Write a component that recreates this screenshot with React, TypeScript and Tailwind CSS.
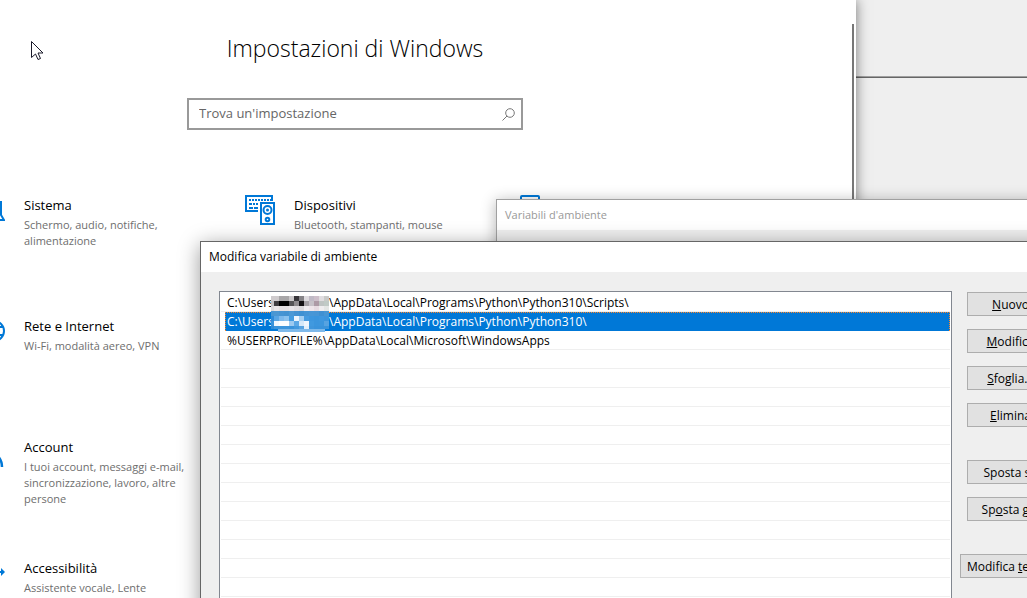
import type { ReactNode } from "react";

const ICON = "#0078d7";

function SystemIcon() {
  return (
    <svg width="30" height="30" viewBox="0 0 30 30" fill="none" stroke={ICON} strokeWidth="2">
      <path d="M4 20V7h22v13l3 5H1z" />
    </svg>
  );
}

function DevicesIcon() {
  return (
    <svg width="30" height="30" viewBox="0 0 30 30" fill="none" stroke={ICON} strokeWidth="2">
      <path d="M27 6V1H1v15h12" />
      <path d="M4 5h22" strokeDasharray="2 1" />
      <path d="M4 9h3m1 0h2m1 0h2M4 13h4m1 0h4" />
      <path d="M16 8h13v21H16z" />
      <circle cx="22.5" cy="15" r="4" />
      <circle cx="22.5" cy="15" r="1.500" fill={ICON} stroke="none" />
      <circle cx="22.5" cy="24.500" r="1.800" />
    </svg>
  );
}

function PhoneIcon() {
  return (
    <svg width="30" height="30" viewBox="0 0 30 30" fill="none" stroke={ICON} strokeWidth="2">
      <rect x="6" y="1" width="18" height="28" rx="1" />
    </svg>
  );
}

function NetworkIcon() {
  return (
    <svg width="30" height="30" viewBox="0 0 30 30" fill="none" stroke={ICON} strokeWidth="2">
      <circle cx="19" cy="15" r="10" />
      <ellipse cx="19" cy="15" rx="5" ry="10" />
      <path d="M10 11h18M10 19h18" />
    </svg>
  );
}

function AccountIcon() {
  return (
    <svg width="30" height="30" viewBox="0 0 30 30" fill="none" stroke={ICON} strokeWidth="2.500">
      <circle cx="14" cy="8" r="6" />
      <path d="M1 30a13 15 0 0 1 26 0" />
    </svg>
  );
}

function AccessIcon() {
  return (
    <svg width="30" height="30" viewBox="0 0 30 30" fill="none" stroke={ICON} strokeWidth="2">
      <circle cx="14" cy="14" r="9" strokeDasharray="4 2" />
      <path d="M14 14h14" />
      <path d="M26 10l4 4-4 4z" fill={ICON} stroke="none" />
    </svg>
  );
}

const categories = [
  { icon: SystemIcon, title: "Sistema", desc: "Schermo, audio, notifiche, alimentazione" },
  { icon: DevicesIcon, title: "Dispositivi", desc: "Bluetooth, stampanti, mouse" },
  { icon: PhoneIcon, title: "", desc: "" },
  { icon: NetworkIcon, title: "Rete e Internet", desc: "Wi-Fi, modalità aereo, VPN" },
  { icon: null, title: "", desc: "" },
  { icon: null, title: "", desc: "" },
  { icon: AccountIcon, title: "Account", desc: "I tuoi account, messaggi e-mail, sincronizzazione, lavoro, altre persone" },
  { icon: null, title: "", desc: "" },
  { icon: null, title: "", desc: "" },
  { icon: AccessIcon, title: "Accessibilità", desc: "Assistente vocale, Lente" },
];

// 5px blocks that hide the user name in the first two rows
const mosaic = [
  ["#cfcbcd", "#cfcbcd", "#a8a6a8", "#a8a6a8", "#cbc8ca", "#38363a", "#858387", "#dedbdf", "#c0bac6", "#cdbfca", "#e0dde0", "#c9cac8"],
  ["#c4c2c4", "#3f3d40", "#000000", "#000000", "#555355", "#8d898c", "#141215", "#a5a1a6", "#c6c1c8", "#ad9aa6", "#bfc4c3", "#c0cac6"],
  ["#dcdadc", "#e9e5e7", "#e3dfe1", "#e3dfe1", "#e8e4e7", "#e2dde0", "#dcd9dc", "#f1edf0", "#eee5ea", "#e7dbe2", "#efedef", "#e4e6e5"],
  ["#4796d4", "#4c97d2", "#4694d3", "#4492d1", "#4b98d5", "#4492d2", "#3e90d2", "#4494d5", "#4896d6", "#4895d5", "#3f90d2", "#4796d4"],
  ["#2f8bd8", "#58a5e4", "#7db9ec", "#8cc2ee", "#439be0", "#eef5fd", "#a5cff2", "#459be0", "#3d96de", "#3b95dd", "#3e97df", "#3c95dd"],
  ["#3a93db", "#f2f7fd", "#fbfdff", "#fbfdff", "#9dcaf0", "#5ca8e5", "#d5e8f9", "#eef5fd", "#4099df", "#3b95dd", "#3c96dd", "#57a3e1"],
  ["#2f8bd8", "#3b94dc", "#3c95dc", "#3d95dc", "#3a93db", "#4399de", "#57a3e1", "#e2effb", "#3f96dc", "#3a93db", "#3a93db", "#3b94db"],
];

const paths = [
  "C:\\Users\\*****\\AppData\\Local\\Programs\\Python\\Python310\\Scripts\\",
  "C:\\Users\\*****\\AppData\\Local\\Programs\\Python\\Python310\\",
  "%USERPROFILE%\\AppData\\Local\\Microsoft\\WindowsApps",
];

function PathText({ path }: { path: string }) {
  const [head, tail] = path.split("\\*****");
  if (tail === undefined) return <span>{path}</span>;
  return (
    <>
      <span className="w-[102px] shrink-0">{head}</span>
      <span>{tail}</span>
    </>
  );
}

function DialogButton({ children, className = "w-[87px]" }: { children: ReactNode; className?: string }) {
  return (
    <button
      type="button"
      className={`${className} h-6 shrink-0 whitespace-nowrap border border-[#adadad] bg-[#e1e1e1] pt-px`}
    >
      {children}
    </button>
  );
}

function SettingsWindow() {
  return (
    <section className="absolute -left-[146px] right-[171px] top-0 flex h-full bg-white shadow-[0_0_12px_rgba(0,0,0,0.5)]">
      <div className="flex-1">
        <h1 className="pt-8 text-center text-[23px] leading-8 font-light text-black">Impostazioni di Windows</h1>
        <div className="mx-auto mt-[34px] flex h-8 w-[336px] items-center border-2 border-[#999] px-[10px]">
          <input
            type="text"
            aria-label="Trova un'impostazione"
            placeholder="Trova un'impostazione"
            className="min-w-0 flex-1 pb-px text-[13px] outline-none placeholder:text-[#666]"
          />
          <svg className="-mr-1" width="13" height="13" viewBox="0 0 13 13" fill="none" stroke="#777">
            <circle cx="8" cy="5" r="4.300" />
            <path d="M5 8 .5 12.500" />
          </svg>
        </div>
        <div className="mx-auto mt-[65px] grid w-[810px] auto-rows-[121px] grid-cols-3">
          {categories.map((c, i) => (
            <div key={i} className="flex gap-[19px] pl-[25px]">
              {c.icon && <c.icon />}
              {c.title && (
                <div className="w-[172px]">
                  <h2 className="text-[13px] leading-5 text-black">{c.title}</h2>
                  <p className="mt-[2px] text-[11px] leading-4 text-[#6e6e6e]">{c.desc}</p>
                </div>
              )}
            </div>
          ))}
        </div>
      </div>
      <div className="mt-6 mr-[2px] -ml-1 w-[2px] bg-[#777]" />
    </section>
  );
}

function EditDialog() {
  return (
    <section className="absolute top-[241px] -right-[46px] left-[200px] border border-[#666] bg-[#efefef] text-[12px] text-black shadow-[0_4px_20px_rgba(0,0,0,0.4)]">
      <h2 className="h-[30px] bg-white pl-2 leading-[30px]">Modifica variabile di ambiente</h2>
      <div className="flex gap-[15px] px-[18px] pt-[19px]">
        <ul className="relative flex-1 border border-[#828790] bg-white p-px">
          {Array.from({ length: 20 }, (_, i) => (
            <li
              key={i}
              className={
                i === 1
                  ? "ml-1 flex h-[19px] items-center border border-b-0 border-dotted border-[#ff8728] bg-[#0078d7] pl-px text-white"
                  : "flex h-[19px] items-center border-b border-[#efefef] pt-[2px] pl-[6px]"
              }
            >
              {paths[i] && <PathText path={paths[i]} />}
            </li>
          ))}
          <svg
            className="absolute top-1 left-[51px]"
            width="58"
            height="36"
            viewBox="0 0 58 36"
            shapeRendering="crispEdges"
            aria-hidden="true"
          >
            {mosaic.map((row, y) =>
              row.map((fill, x) => <rect key={`${x}-${y}`} x={x * 5 - 2} y={y * 5} width="5" height="5" fill={fill} />)
            )}
            <rect y="33" width="58" height="3" fill="#0078d7" />
            <rect y="35" width="58" height="1" fill="#fff" />
            <rect x="7" y="33" width="47" height="3" fill="#7eb9ea" />
          </svg>
        </ul>
        <div className="mt-px flex w-[87px] flex-col items-end gap-[13px]">
          <DialogButton><u>N</u>uovo</DialogButton>
          <DialogButton><u>M</u>odifica</DialogButton>
          <DialogButton><u>S</u>foglia...</DialogButton>
          <DialogButton><u>E</u>limina</DialogButton>
          <DialogButton className="mt-5 w-[87px]">Sposta s<u>u</u></DialogButton>
          <DialogButton>Sp<u>o</u>sta giù</DialogButton>
          <DialogButton className="mt-5 w-[94px] pl-[6px] text-left">Modifica <u>t</u>esto...</DialogButton>
        </div>
      </div>
    </section>
  );
}

export default function App() {
  return (
    <main className="relative h-screen overflow-hidden bg-[#efefef] font-['Open_Sans','Noto_Sans',sans-serif]">
      <div className="h-[77px] border-b border-[#a0a0a0]" />
      <div className="border-t border-[#666]" />
      <SettingsWindow />

      <section className="absolute top-[199px] -right-[80px] left-[496px] h-full border border-[#a0a0a0] bg-[#efefef] shadow-[0_2px_14px_rgba(0,0,0,0.3)]">
        <h2 className="h-[30px] bg-white pl-2 text-[11px] leading-[30px] text-[#999]">Variabili d'ambiente</h2>
      </section>

      <EditDialog />

      {/* Mouse pointer */}
      <svg className="absolute top-[41px] left-[31px]" width="12" height="19" viewBox="0 0 12 19" aria-hidden="true">
        <path d="M.5.5v16l4-3.500 2.500 5.500 2.500-1-2.500-5.500h5z" fill="#fff" stroke="#1a1a2a" />
      </svg>
    </main>
  );
}
